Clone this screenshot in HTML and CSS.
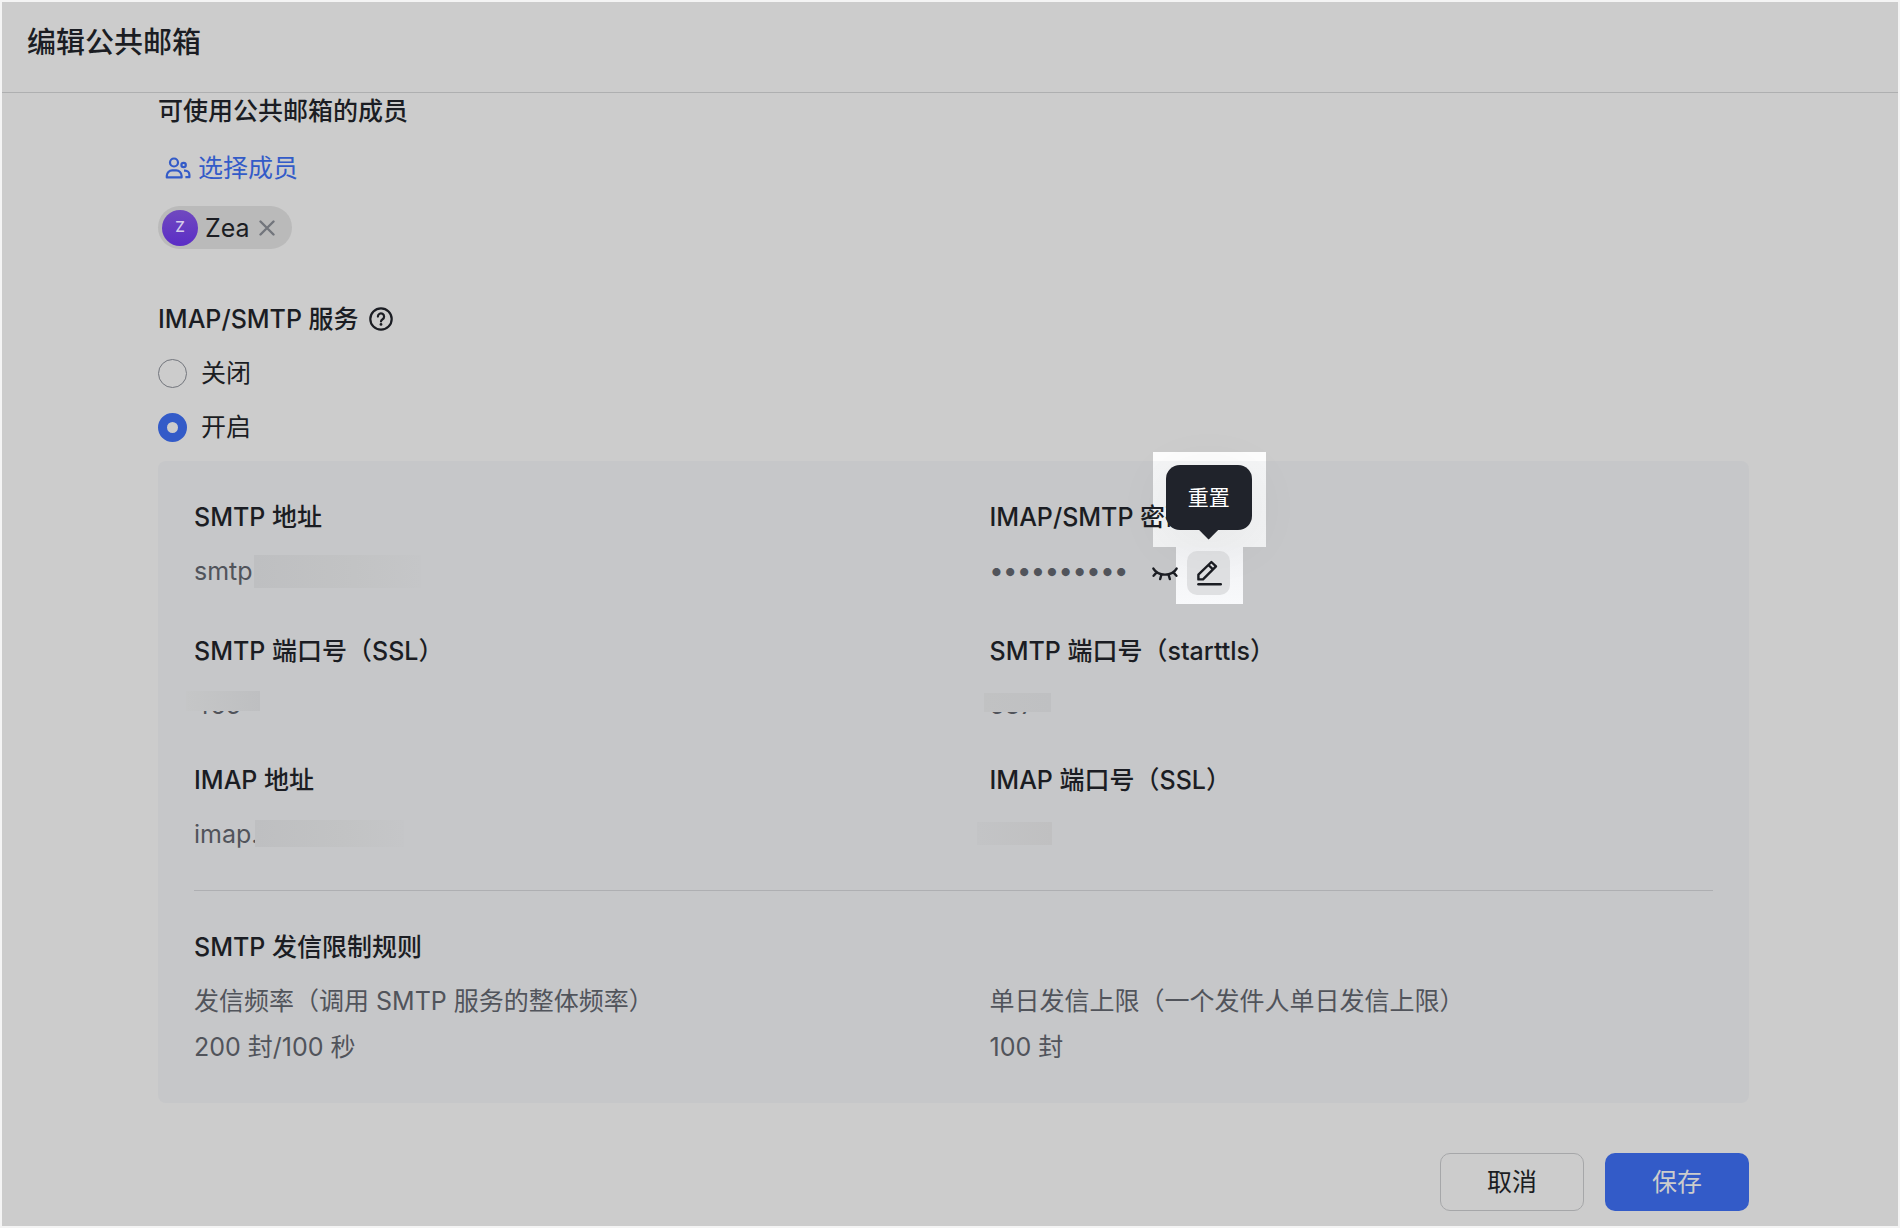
FILE: index.html
```html
<!DOCTYPE html>
<html lang="zh-CN">
<head>
    <meta charset="UTF-8">
    <meta name="viewport" content="width=device-width, initial-scale=1.0">
    <title>编辑公共邮箱</title>
    <link rel="stylesheet" href="styles.css">
</head>
<body>

    <div class="page">
        <header class="header">
            <h1>编辑公共邮箱</h1>
        </header>

        <form class="content">
            <section class="members">
                <h2>可使用公共邮箱的成员</h2>
                <button type="button" class="select-btn">
                    <svg width="26" height="22" viewBox="0 0 26 22" fill="none" stroke="currentColor" stroke-width="2.2">
                        <circle cx="9" cy="5.5" r="4"/>
                        <path d="M1.800 20.400v-1.600a5.400 5.400 0 0 1 5.400-5.400h4a5.400 5.400 0 0 1 5.400 5.400v1.600z" stroke-linejoin="round"/>
                        <circle cx="18.600" cy="8" r="2.200"/>
                        <path d="M19 13.600h1a4.400 4.400 0 0 1 4.400 4.400v2.200h-4" stroke-linejoin="round"/>
                    </svg>
                    选择成员
                </button>
                <div class="chip">
                    <span class="avatar">Z</span>
                    <span>Zea</span>
                    <button type="button" class="chip-remove" aria-label="移除">
                        <svg width="16" height="16" viewBox="0 0 16 16" fill="none" stroke="currentColor" stroke-width="2.4" stroke-linecap="round">
                            <path d="M1.5 1.5l13 13M14.5 1.5l-13 13"/>
                        </svg>
                    </button>
                </div>
            </section>

            <section class="service">
                <h2>
                    IMAP/SMTP 服务
                    <svg width="24" height="24" viewBox="0 0 24 24" fill="none" stroke="currentColor" stroke-width="2.2">
                        <circle cx="12" cy="12" r="10.700"/>
                        <path d="M8.900 9.600a3.100 3.100 0 1 1 4.700 2.600c-1 .6-1.600 1.100-1.600 2.300" stroke-linecap="round"/>
                        <circle cx="12" cy="17.400" r="1.400" fill="currentColor" stroke="none"/>
                    </svg>
                </h2>
                <label class="radio"><input type="radio" name="service">关闭</label>
                <label class="radio"><input type="radio" name="service" checked>开启</label>
            </section>

            <section class="panel">
                <div class="grid">
                    <div class="field">
                        <h3>SMTP 地址</h3>
                        <p>smtp<span class="mask mask-smtp"></span></p>
                    </div>
                    <div class="field">
                        <h3>IMAP/SMTP 密码</h3>
                        <div class="secret">
                            <span class="dots">••••••••••</span>
                            <button type="button" class="eye-btn" aria-label="显示">
                                <svg width="26" height="14" viewBox="0 0 26 14" fill="none" stroke="currentColor" stroke-width="2.4" stroke-linecap="round">
                                    <path d="M1.400 1.600c2.400 4 6.400 6 11.600 6s9.200-2 11.600-6M4.600 5.400l-3 3.400M9.400 7.600l-1.200 4.400M16.600 7.600l1.200 4.400M21.400 5.400l3 3.400"/>
                                </svg>
                            </button>
                            <div class="reset">
                                <div class="spot spot-tip"></div>
                                <div class="spot spot-btn"></div>
                                <button type="button" class="edit-btn" aria-describedby="reset-tip" aria-label="重置">
                                    <svg width="26" height="26" viewBox="0 0 26 26" fill="none" stroke="currentColor" stroke-width="2.4" stroke-linejoin="round">
                                        <path d="M2.400 19.400v-4.800L15.400 2l4.600 4.400L7 19.400zM12.400 5l4.600 4.400"/>
                                        <path d="M2.400 24.200h22.400" stroke-linecap="round"/>
                                    </svg>
                                </button>
                                <div class="tooltip" id="reset-tip" role="tooltip">重置</div>
                            </div>
                        </div>
                    </div>
                    <div class="field">
                        <h3>SMTP 端口号（SSL）</h3>
                        <p>465<span class="mask mask-port"></span></p>
                    </div>
                    <div class="field">
                        <h3>SMTP 端口号（starttls）</h3>
                        <p>587<span class="mask mask-port-tls"></span></p>
                    </div>
                    <div class="field">
                        <h3>IMAP 地址</h3>
                        <p>imap.<span class="mask mask-imap"></span></p>
                    </div>
                    <div class="field">
                        <h3>IMAP 端口号（SSL）</h3>
                        <p><span class="mask mask-port-imap"></span></p>
                    </div>
                </div>

                <div class="rules">
                    <h3>SMTP 发信限制规则</h3>
                    <div class="grid">
                        <div class="rule">
                            <p>发信频率（调用 SMTP 服务的整体频率）</p>
                            <p>200 封/100 秒</p>
                        </div>
                        <div class="rule">
                            <p>单日发信上限（一个发件人单日发信上限）</p>
                            <p>100 封</p>
                        </div>
                    </div>
                </div>
            </section>

            <footer class="actions">
                <button type="button" class="btn cancel-btn">取消</button>
                <button type="submit" class="btn save-btn">保存</button>
            </footer>
        </form>
    </div>

</body>
</html>
```
FILE: styles.css
```css
* {
    box-sizing: border-box;
}

body {
    margin: 0;
    background: #f4f4f4;
    font-family: Inter, "Noto Sans CJK SC", sans-serif;
    font-size: 25px;
    line-height: 36px;
    color: #1b1d23;
}

h1, h2, h3, p {
    margin: 0;
    font-size: 25px;
    font-weight: 500;
}

p {
    font-weight: 400;
    color: #51545b;
}

button {
    padding: 0;
    border: none;
    background: none;
    font: inherit;
    color: inherit;
    cursor: pointer;
}

svg {
    display: block;
    flex: none;
}

.page {
    min-height: 100vh;
    border: 2px solid #f4f4f4;
    background: #cccccc;
}

.header {
    height: 91px;
    padding: 23px 25px;
    border-bottom: 1px solid #aeafb0;
}

.header h1 {
    font-size: 29px;
}

.content {
    padding: 0 149px 15px 156px;
}

.members {
    display: flex;
    flex-direction: column;
    align-items: flex-start;
    margin-bottom: 52px;
}

.select-btn {
    display: flex;
    align-items: center;
    gap: 7px;
    margin: 21px 0 20px;
    padding-left: 7px;
    color: #335bc8;
}

.chip {
    display: flex;
    align-items: center;
    height: 43px;
    padding: 0 17px 0 4px;
    border-radius: 22px;
    background: #bababa;
}

.avatar {
    width: 36px;
    height: 36px;
    margin-right: 7px;
    border-radius: 50%;
    background: linear-gradient(#7049bf, #5b2dc6);
    color: #d5cceb;
    font-size: 15px;
    font-weight: 500;
    line-height: 34px;
    text-align: center;
}

.chip-remove {
    margin-left: 9px;
    color: #72757c;
}

.service {
    display: flex;
    flex-direction: column;
    align-items: flex-start;
    gap: 18px;
    margin-bottom: 16px;
}

.service h2 {
    display: flex;
    align-items: center;
    gap: 10px;
}

.radio {
    display: flex;
    align-items: center;
    gap: 14px;
}

.radio input {
    appearance: none;
    width: 29px;
    height: 29px;
    margin: 0;
    border: 1px solid #72757c;
    border-radius: 50%;
}

.radio input:checked {
    border: 9px solid #335bc8;
}

.panel {
    position: relative;
    z-index: 0;
    padding: 38px 36px;
    border-radius: 8px;
    background: #c6c7c9;
}

.grid {
    display: grid;
    grid-template-columns: 1fr 1fr;
    gap: 39px 72px;
}

.field h3 {
    margin-bottom: 18px;
}

.field p {
    position: relative;
    height: 36px;
}

/* blurred patches over private values */
.mask {
    position: absolute;
    background: linear-gradient(to right, #bebfc1, #c2c3c4 60%, #c5c6c8);
}

.mask-smtp {
    left: 60px;
    top: 2px;
    width: 167px;
    height: 33px;
}

.mask-imap {
    left: 61px;
    top: 4px;
    width: 149px;
    height: 27px;
}

.mask-port {
    left: -8px;
    top: 4px;
    width: 74px;
    height: 20px;
    background: linear-gradient(to right, #c5c6c7, #bebfc1);
}

.mask-port-tls {
    left: -6px;
    top: 6px;
    width: 67px;
    height: 19px;
    background: linear-gradient(to right, #c1c2c3, #bfc0c2);
}

.mask-port-imap {
    left: -13px;
    top: 6px;
    width: 75px;
    height: 23px;
    background: linear-gradient(to right, #c3c4c6, #c0c0c1);
}

.secret {
    display: flex;
    align-items: center;
    height: 41px;
}

.dots {
    align-self: flex-start;
    color: #51545b;
    font-size: 26px;
    font-weight: 500;
}

.eye-btn {
    margin-left: 24px;
}

.reset {
    position: relative;
    margin: -3px 0 -1px 9px;
}

.edit-btn {
    display: grid;
    place-items: center;
    width: 43px;
    height: 44px;
    border-radius: 10px;
    background: #dfe0e2;
}

/* undimmed areas behind the tooltip and its button */
.spot {
    position: absolute;
    z-index: -1;
}

.spot-tip {
    left: -34px;
    bottom: 48px;
    width: 113px;
    height: 95px;
    background: linear-gradient(#fdfdfd 9px, #f4f5f6 9px, #f1f2f3);
}

.spot-btn {
    left: -11px;
    top: -4px;
    width: 67px;
    height: 57px;
    background: linear-gradient(#f1f2f4, #f8f9fb);
}

.tooltip {
    position: absolute;
    bottom: 65px;
    left: 50%;
    width: 86px;
    height: 65px;
    transform: translateX(-50%);
    border-radius: 14px;
    background: #20232b;
    box-shadow: 0 10px 60px rgba(0, 0, 0, 0.06);
    color: #ffffff;
    font-size: 21px;
    line-height: 65px;
    text-align: center;
}

.tooltip::after {
    content: "";
    position: absolute;
    top: 64px;
    left: 50%;
    width: 22px;
    height: 11px;
    transform: translateX(-50%);
    background: #20232b;
    clip-path: polygon(0 0, 100% 0, 55% 90%, 50% 100%, 45% 90%);
}

.rules {
    margin-top: 38px;
    padding-top: 38px;
    border-top: 1px solid #aeafb2;
}

.rules h3 {
    margin-bottom: 18px;
}

.rule {
    display: flex;
    flex-direction: column;
    gap: 10px;
}

.actions {
    display: flex;
    justify-content: flex-end;
    gap: 21px;
    margin-top: 50px;
}

.btn {
    width: 144px;
    height: 58px;
    border-radius: 10px;
}

.cancel-btn {
    border: 1px solid #a6a7a9;
}

.save-btn {
    background: #335bc8;
    color: #cccccc;
}
```
